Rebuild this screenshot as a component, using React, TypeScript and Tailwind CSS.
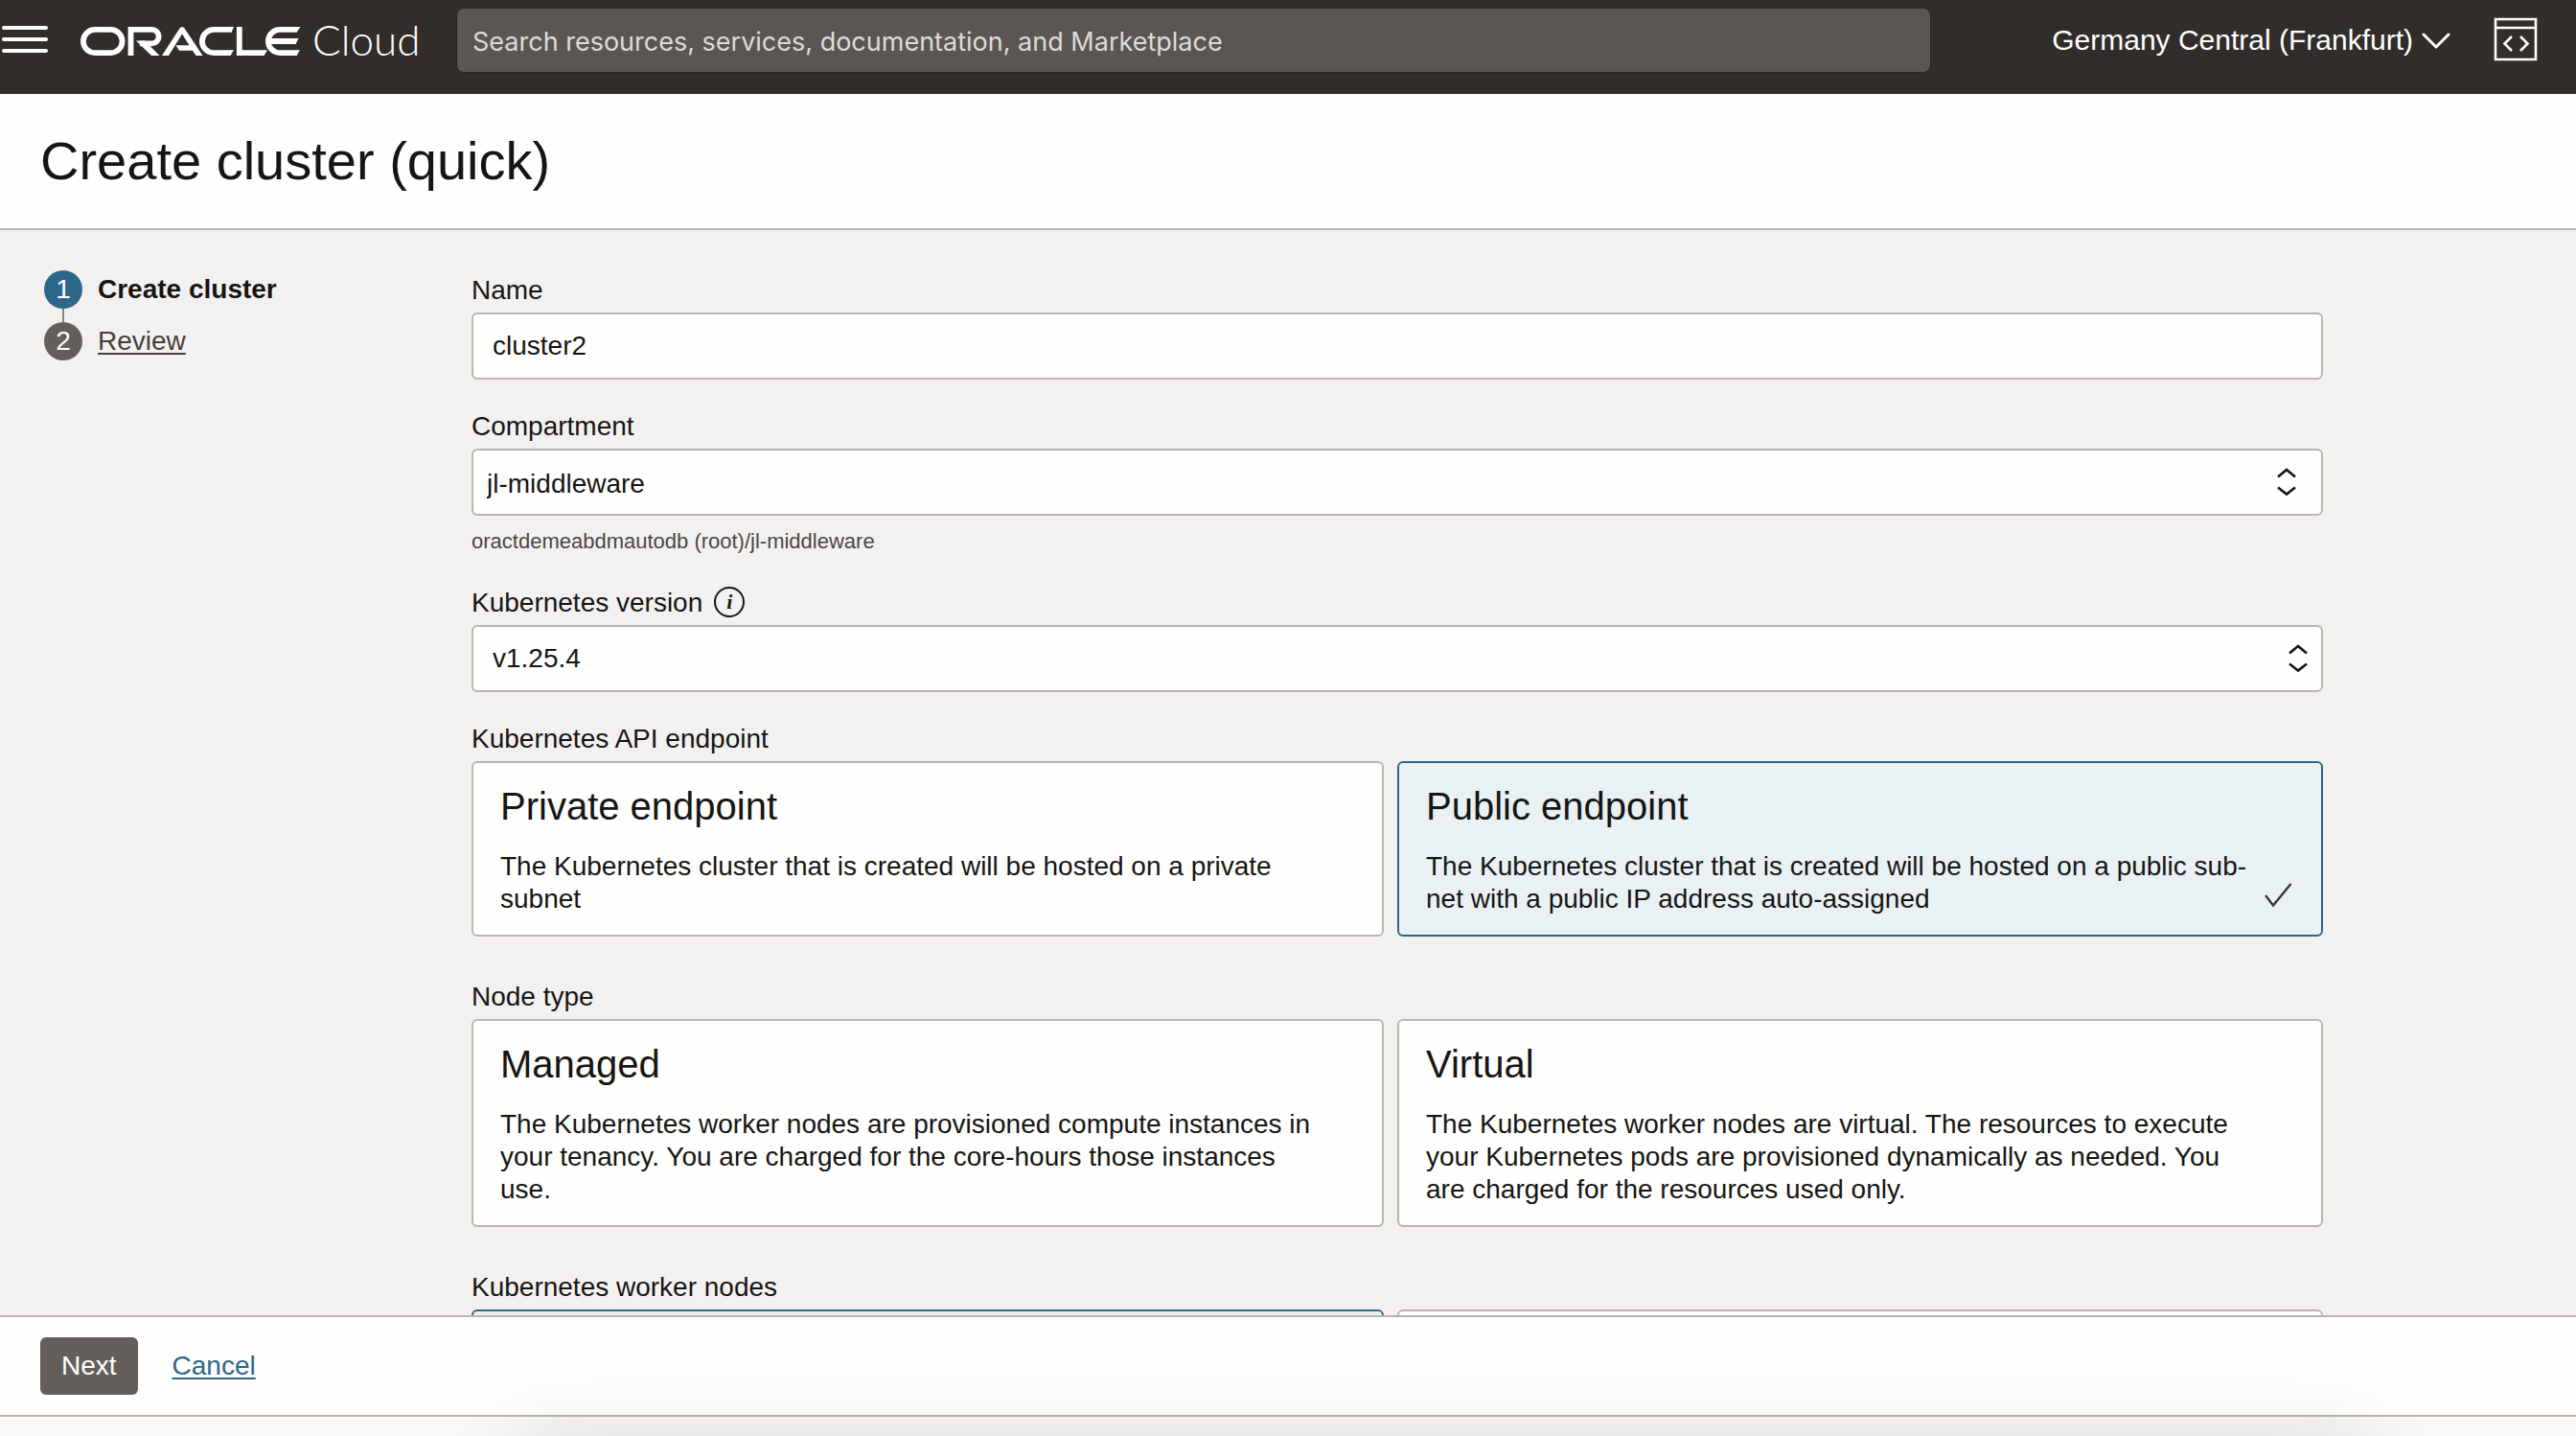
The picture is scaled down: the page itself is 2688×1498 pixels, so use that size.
import React from "react";

function Logo() {
  return (
    <svg className="h-[60px] w-[358px] shrink-0" viewBox="84 12 358 60" role="img" aria-label="Oracle Cloud">
      <g fill="none" stroke="#fff" strokeWidth="5.8">
        <path d="M99 30.900H115.500A12.100 12.100 0 0 1 115.500 55.100H99A12.100 12.100 0 0 1 99 30.900Z" />
        <path d="M136.500 58V30.900H158.500A7.200 7.200 0 0 1 158.500 45.300H146" />
        <path d="M242 30.900H223A12.100 12.100 0 0 0 223 55.100H241" />
        <path d="M249.800 28V55.100H276" />
        <path d="M310 30.900H292A12.100 12.100 0 0 0 292 55.100H310M281 43H309" />
      </g>
      <g fill="#fff">
        <path d="M142 42.400H151L166.500 58H158Z" />
        <path d="M169 58L187.500 29.500Q190 26.500 192.500 29.500L211.500 58H204.500L201 52.800H187L183.500 47.300H197.500L190 35.500L176 58Z" />
        <path d="M241.500 28H244L241.500 33.800ZM240.500 52.200H244L240.500 58Z" />
        <path d="M275.500 52.200H279L275.500 58Z" />
        <path d="M309.500 28H313.500L309.500 33.800ZM309.500 52.200H313L309.500 58ZM308.500 40.100H311.500L308.500 45.900Z" />
      </g>
      <text x="326" y="58" fill="#fff" fontSize="44" fontFamily="Lato, sans-serif" fontWeight="300">Cloud</text>
    </svg>
  );
}

function Sorter() {
  return (
    <svg className="h-8 w-5" viewBox="0 0 20 32" fill="none" stroke="#161513" strokeWidth="2.600">
      <path d="M1 10.500L10 3L19 10.500M1 21.500L10 28.500L19 21.500" />
    </svg>
  );
}

function SelectBox({ id, value, inset }: { id: string; value: string; inset: boolean }) {
  return (
    <div className="grid items-center">
      <select
        id={id}
        defaultValue={value}
        className={
          "col-start-1 row-start-1 h-[70px] w-full appearance-none rounded-md border-2 border-[#bbb5af] bg-[#fefefc] text-[28px] " +
          (inset ? "px-[14px] pt-1" : "px-5")
        }
      >
        <option>{value}</option>
      </select>
      <span className={"pointer-events-none col-start-1 row-start-1 justify-self-end " + (inset ? "mr-7" : "mr-4")}>
        <Sorter />
      </span>
    </div>
  );
}

type CardData = { label?: string; title?: string; text?: string; on?: boolean };

function Card({ label, title, text, on, name }: CardData & { name: string }) {
  return (
    <label
      className={
        "flex min-h-20 items-end rounded-md border-2 px-7 pt-[21px] pb-5 " +
        (on ? "border-[#2c6689] bg-[#e9f1f4]" : "border-[#bbb5af] bg-[#fefefc]")
      }
    >
      <input type="radio" name={name} aria-label={label} defaultChecked={on} className="sr-only" />
      {title && (
        <span className="flex flex-1 flex-col gap-[22px]">
          <span className="text-[40px] leading-[48px]">{title}</span>
          <span className="text-[28px] leading-[34px]">{text}</span>
        </span>
      )}
      {on && title ? (
        <svg className="mb-2 h-7 w-8" viewBox="0 0 32 28" fill="none" stroke="#3a3835" strokeWidth="2.400">
          <path d="M2 15L10 25.500L28.500 3" />
        </svg>
      ) : (
        <span className="w-8" />
      )}
    </label>
  );
}

function CardGroup({ legend, name, cards }: { legend: string; name: string; cards: CardData[] }) {
  return (
    <fieldset>
      <legend className="mb-[6px] text-[28px] leading-[34px]">{legend}</legend>
      <div className="grid grid-cols-[952fr_966fr] gap-[14px]">
        {cards.map((c, i) => (
          <Card key={i} name={name} {...c} />
        ))}
      </div>
    </fieldset>
  );
}

export default function App() {
  return (
    <div className="flex h-screen flex-col overflow-hidden bg-[#faf8f7] font-['Liberation_Sans',Arial,sans-serif] text-[#161513]">
      <header className="flex h-[98px] shrink-0 items-start bg-[#312d2a] text-white">
        <button aria-label="Menu" className="mt-[27px] ml-[2px] flex w-12 shrink-0 flex-col gap-2">
          <span className="h-1 w-full rounded-sm bg-white" />
          <span className="h-1 w-full rounded-sm bg-white" />
          <span className="h-1 w-full rounded-sm bg-white" />
        </button>
        <div className="mt-3 ml-[34px] shrink-0">
          <Logo />
        </div>
        <input
          aria-label="Search"
          placeholder="Search resources, services, documentation, and Marketplace"
          className="mt-2 ml-[34px] h-[68px] min-w-0 flex-1 rounded-lg border border-[#292522] bg-[#5b5652] px-4 pt-[2px] font-[Inter,sans-serif] text-[27px] placeholder:text-[#dedbd8]"
        />
        <button className="mt-6 ml-[126px] flex shrink-0 items-center gap-2 text-[30px] leading-[36px]">
          Germany Central (Frankfurt)
          <svg className="h-5 w-8" viewBox="0 0 32 20" fill="none" stroke="#fff" strokeWidth="3" strokeLinecap="round" strokeLinejoin="round">
            <path d="M3 4L16 17L29 4" />
          </svg>
        </button>
        <button aria-label="Developer tools" className="mt-[18px] mr-10 ml-11 shrink-0">
          <svg className="h-[46px] w-[46px]" viewBox="0 0 46 46" fill="none" stroke="#fff" strokeWidth="2.600">
            <path d="M2 2H44V44H2ZM2 11H44M19 20L11.500 27.500L19 35M28 20L35.500 27.500L28 35" />
          </svg>
        </button>
      </header>

      <div className="flex h-[142px] shrink-0 items-center border-b-2 border-[#bbb5af] bg-[#fefefc] px-[42px]">
        <h1 className="text-[56px] leading-[64px]">Create cluster (quick)</h1>
      </div>

      <div className="flex min-h-0 flex-1 overflow-hidden bg-[#f3f1f0]">
        <nav className="w-[492px] shrink-0 pt-[42px] pl-[46px] text-[28px] leading-10">
          <ol>
            <li className="flex items-center gap-4">
              <span className="flex size-10 items-center justify-center rounded-full bg-[#2c6689] text-white">1</span>
              <b>Create cluster</b>
            </li>
            <li className="ml-[19px] h-[14px] w-[2px] bg-[#8b8580]" />
            <li className="flex items-center gap-4">
              <span className="flex size-10 items-center justify-center rounded-full bg-[#655f5b] text-white">2</span>
              <a href="#review" className="text-[#43403c] underline decoration-2 underline-offset-3">Review</a>
            </li>
          </ol>
        </nav>

        <form className="mr-[264px] flex-1 pt-[46px] text-[28px]">
          <label htmlFor="name" className="mb-[6px] block leading-[34px]">Name</label>
          <input
            id="name"
            defaultValue="cluster2"
            className="mb-8 block h-[70px] w-full rounded-md border-2 border-[#bbb5af] bg-[#fefefc] px-5"
          />
          <label htmlFor="compartment" className="mb-[6px] block leading-[34px]">Compartment</label>
          <SelectBox id="compartment" value="jl-middleware" inset />
          <p className="mt-[14px] mb-[34px] text-[22px] leading-[26px] text-[#4a4743]">oractdemeabdmautodb (root)/jl-middleware</p>
          <div className="mb-[6px] flex items-start gap-3">
            <label htmlFor="version" className="leading-[34px]">Kubernetes version</label>
            <button type="button" aria-label="About Kubernetes version" className="flex size-8 items-center justify-center rounded-full border-2 border-[#161513]">
              <i className="font-['Liberation_Serif',serif] text-[22px] leading-[24px] font-bold">i</i>
            </button>
          </div>
          <SelectBox id="version" value="v1.25.4" inset={false} />
          <div className="mt-8 flex flex-col gap-[46px]">
            <CardGroup
              legend="Kubernetes API endpoint"
              name="endpoint"
              cards={[
                { title: "Private endpoint", text: "The Kubernetes cluster that is created will be hosted on a private subnet" },
                { title: "Public endpoint", text: "The Kubernetes cluster that is created will be hosted on a public sub\u00adnet with a public IP address auto-assigned", on: true },
              ]}
            />
            <CardGroup
              legend="Node type"
              name="node"
              cards={[
                { title: "Managed", text: "The Kubernetes worker nodes are provisioned compute instances in your tenancy. You are charged for the core-hours those instances use." },
                { title: "Virtual", text: "The Kubernetes worker nodes are virtual. The resources to execute your Kubernetes pods are provisioned dynamically as needed. You are charged for the resources used only." },
              ]}
            />
            <CardGroup
              legend="Kubernetes worker nodes"
              name="workers"
              cards={[{ label: "Private workers", on: true }, { label: "Public workers" }]}
            />
          </div>
        </form>
      </div>

      <footer className="relative shrink-0">
        <div className="flex h-[106px] items-center gap-9 border-y-2 border-[#bbb5af] bg-[#fefefc] px-[42px] text-[28px]">
          <button className="h-[60px] rounded-md bg-[#655f5b] px-[22px] text-white">Next</button>
          <a href="#cancel" className="text-[#2c6689] underline decoration-2 underline-offset-3">Cancel</a>
        </div>
        <div className="h-5" />
        <div className="pointer-events-none absolute top-full right-[216px] left-[540px] h-20 shadow-[0_0_80px_rgba(0,0,0,0.12)]" />
      </footer>
    </div>
  );
}
